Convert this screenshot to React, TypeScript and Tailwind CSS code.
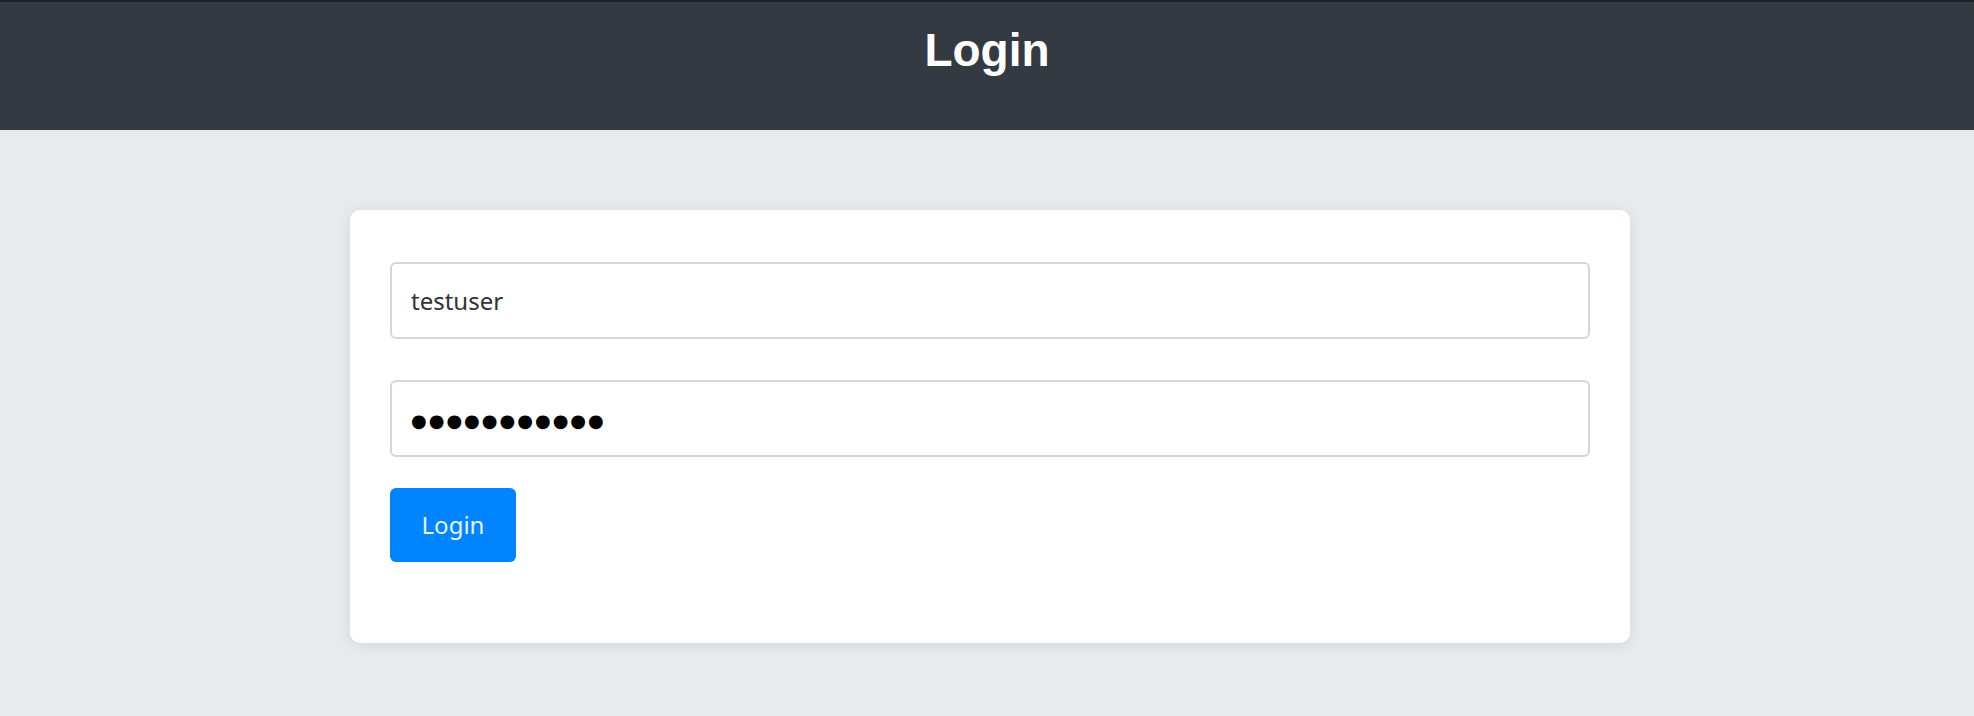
import { useState } from "react";

export default function App() {
  const [username, setUsername] = useState("testuser");
  const [password, setPassword] = useState("password123");

  return (
    <div className="min-h-[716px] bg-[#e8ebee] font-['Noto_Sans',sans-serif]">
      {/* header */}
      <header className="border-t-2 border-[#1f2327] bg-[#343a41] pt-[22px] pb-[53px]">
        <h1 className="text-center font-['Liberation_Sans',Arial,sans-serif] text-[46px] font-bold leading-[53px] text-white">
          Login
        </h1>
      </header>

      {/* card */}
      <main className="flex justify-center pt-[80px] pl-[6px]">
        <form
          className="flex w-[1280px] flex-col rounded-[10px] bg-white px-[40px] pt-[52px] pb-[81px] shadow-[0_2px_14px_rgba(0,0,0,0.09)]"
          onSubmit={(e) => e.preventDefault()}
        >
          <input
            type="text"
            value={username}
            onChange={(e) => setUsername(e.target.value)}
            className="h-[77px] w-full rounded-[6px] border-2 border-[#d6d6d6] bg-white px-[19px] text-[24px] text-[#333] outline-none"
          />
          {/* masked password: bullets drawn as text so the dot size matches */}
          <input
            type="text"
            autoComplete="off"
            value={"●".repeat(password.length)}
            onChange={(e) => setPassword("x".repeat(e.target.value.length))}
            className="mt-[41px] h-[77px] w-full rounded-[6px] border-2 border-[#d6d6d6] bg-white px-[19px] pt-[3px] font-['DejaVu_Sans',sans-serif] text-[18px] tracking-[2px] text-black outline-none"
          />
          <div className="mt-[31px]">
            <button
              type="submit"
              className="h-[74px] w-[126px] rounded-[6px] bg-[#0084ff] text-[24px] text-[#e8f3ff]"
            >
              Login
            </button>
          </div>
        </form>
      </main>
    </div>
  );
}
